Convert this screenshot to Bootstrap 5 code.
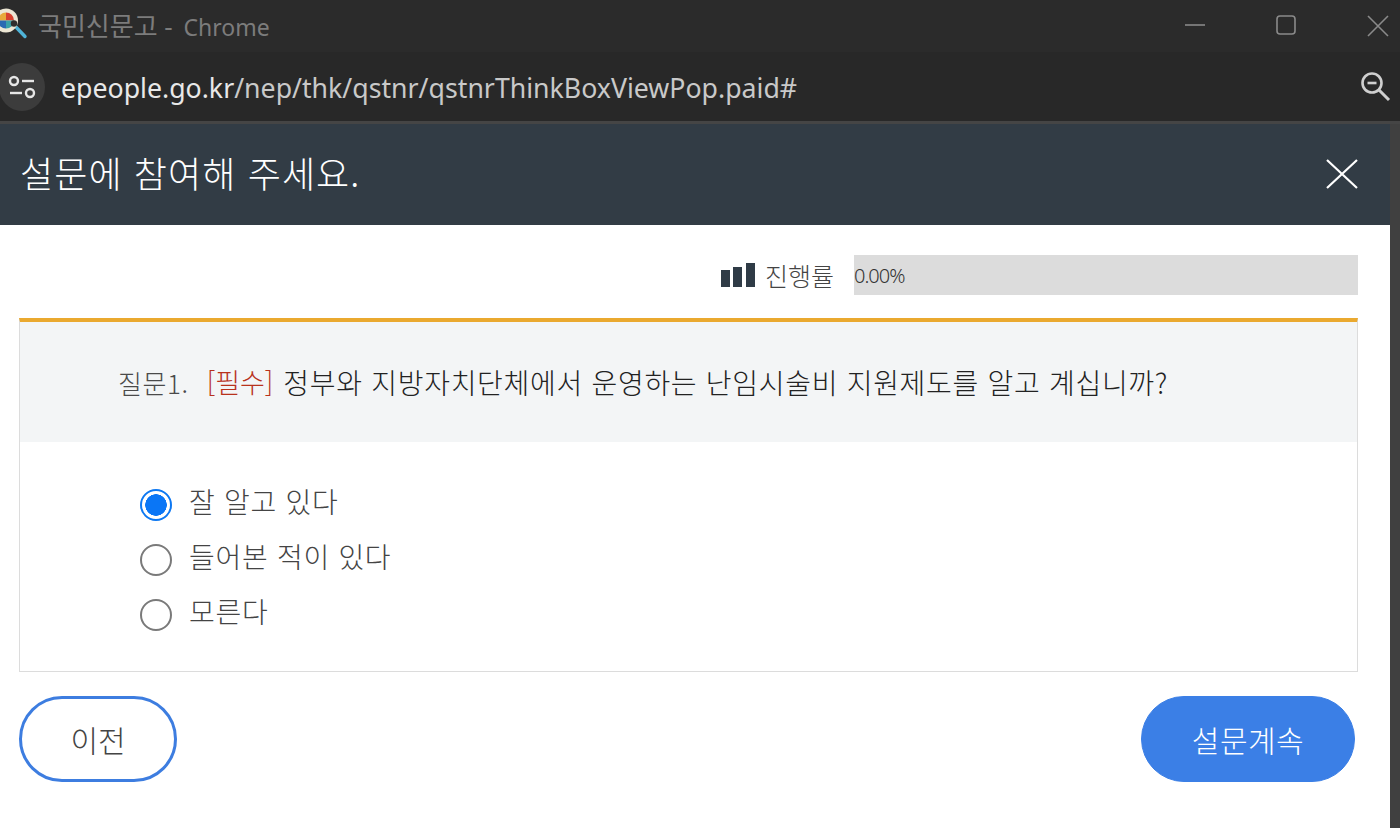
<!DOCTYPE html>
<html lang="ko">
<head>
<meta charset="utf-8">
<title>국민신문고</title>
<link rel="stylesheet" href="https://cdn.jsdelivr.net/npm/bootstrap@5.3.0/dist/css/bootstrap.min.css">
<style>
html,body{height:828px;overflow:hidden;background:#404040;}
body{font-family:"Noto Sans CJK KR","Noto Sans",sans-serif;color:#444;font-weight:300;}
.chrome-title{height:52px;background:#2b2b2b;color:#7c7c7c;font-size:26px;padding-top:1px;}
.chrome-title .appname{margin-left:38px;line-height:50px;white-space:nowrap;font-family:"Noto Sans","Noto Sans CJK KR",sans-serif;font-weight:400;}
.appname .ver{font-size:23px;margin-left:4px;}
.fav{position:absolute;left:0;top:8px;}
.win-ico{position:absolute;top:15px;}
.chrome-addr{height:69px;background:#282828;color:#c9c9c9;font-size:26.7px;font-family:"Noto Sans",sans-serif;font-weight:400;}
.site-btn{width:46px;height:48px;margin-left:-1px;border-radius:50%;background:#3c3c3c;flex:none;}
.addr-host{color:#e8e8e8;}
.addr-text{margin-left:16px;margin-top:4px;white-space:nowrap;}
.zoom-ico{margin-left:auto;margin-right:9px;margin-top:0;}
.chrome-sep{height:3px;background:#454545;}
.pop{width:1390px;height:704px;background:#fff;}
.pop-head{height:101px;background:#323c45;color:#fff;padding:0 32px 0 20px;}
.pop-head h1{font-size:36px;font-weight:300;margin:0 0 5px;line-height:1;letter-spacing:1.1px;}
.pop-head svg{margin-bottom:2px;}
.pop-body{padding:30px 32px 0 19px;}
.prog-row{height:40px;}
.prog-label{font-size:25px;color:#444;margin:0 20px 0 10px;padding-top:2px;}
.prog-track{width:504px;height:40px;background:#dcdcdc;font-size:20px;color:#333;line-height:42px;letter-spacing:-1px;font-family:"Noto Sans",sans-serif;font-weight:300;}
.q-box{margin-top:23px;border:1px solid #dcdcdc;border-top:4px solid #eaa92f;height:354px;}
.q-title{height:120px;background:#f3f5f6;padding-left:98px;font-size:28px;color:#222;white-space:nowrap;letter-spacing:.7px;}
.q-num{color:#4a4a4a;margin-right:18px;font-size:26px;letter-spacing:.6px;}
.q-req{color:#b8321c;margin-right:10px;font-size:27px;letter-spacing:0;}
.q-opts{padding:33px 0 0 120px;}
.opt{height:55px;font-size:28px;color:#444;gap:17px;letter-spacing:.7px;}
.opt .form-check-input{width:32px;height:32px;margin:0;border:2px solid #7a7a7a;flex:none;margin-top:5px;float:none;}
.opt .form-check-input:checked{background-color:#fff;border-color:#0d78f2;background-image:radial-gradient(circle,#0a76f6 0,#0a76f6 10.5px,#fff 11px);}
.opt label{margin-top:-3px;}
.btn-row{margin-top:24px;padding-right:3px;}
.btn-prev,.btn-next{height:86px;border-radius:43px;font-size:30px;padding:0;font-weight:300;}
.btn-prev{width:158px;background:#fff;border:3px solid #3d7de0;color:#444;}
.btn-next{width:214px;background:#3b7fe6;border:1px solid #3b7fe6;color:#fff;letter-spacing:.5px;}
.btn-prev:hover{background:#fff;color:#444;border-color:#3d7de0;}
.btn-next:hover{background:#3b7fe6;color:#fff;border-color:#3b7fe6;}
</style>
</head>
<body>
<div class="chrome-title position-relative">
  <svg class="fav" width="28" height="31" viewBox="0 0 28 31">
    <line x1="14" y1="17" x2="25" y2="28.500" stroke="#4fb4d8" stroke-width="3.400" stroke-linecap="round"/>
    <circle cx="6" cy="12.500" r="12" fill="#ece6d4"/>
    <path d="M6 12.500V4.500A8 8 0 0 1 14 12.500z" fill="#d8412f"/>
    <path d="M6 12.500H-2A8 8 0 0 1 6 4.500z" fill="#e8a93a"/>
    <path d="M6 12.500V20.500A8 8 0 0 1 -2 12.500z" fill="#2b69b3"/>
    <path d="M6 12.500H14A8 8 0 0 1 6 20.500z" fill="#3aa0a8"/>
    <circle cx="14" cy="15.500" r="3.200" fill="#2e2e2e"/>
  </svg>
  <div class="appname">국민신문고 - <span class="ver">Chrome</span></div>
  <svg class="win-ico" style="left:1185px" width="20" height="20" viewBox="0 0 20 20"><line x1="0" y1="10" x2="20" y2="10" stroke="#8a8a8a" stroke-width="1.6"/></svg>
  <svg class="win-ico" style="left:1276px" width="20" height="20" viewBox="0 0 20 20"><rect x="1" y="1" width="18" height="18" rx="3" fill="none" stroke="#8a8a8a" stroke-width="1.6"/></svg>
  <svg class="win-ico" style="left:1367px" width="22" height="22" viewBox="0 0 22 22"><path d="M1 1l20 20M21 1L1 21" stroke="#8a8a8a" stroke-width="1.6"/></svg>
</div>
<div class="chrome-addr d-flex align-items-center">
  <div class="site-btn d-flex align-items-center justify-content-center">
    <svg width="28" height="26" viewBox="0 0 28 26"><circle cx="6" cy="7" r="4" fill="none" stroke="#e6e6e6" stroke-width="2.4"/><line x1="14" y1="7" x2="26" y2="7" stroke="#e6e6e6" stroke-width="2.4"/><line x1="2" y1="19" x2="14" y2="19" stroke="#e6e6e6" stroke-width="2.4"/><circle cx="22" cy="19" r="4" fill="none" stroke="#e6e6e6" stroke-width="2.4"/></svg>
  </div>
  <div class="addr-text"><span class="addr-host">epeople.go.kr</span>/nep/thk/qstnr/qstnrThinkBoxViewPop.paid#</div>
  <svg class="zoom-ico" width="30" height="30" viewBox="0 0 30 30"><circle cx="11" cy="11" r="9.500" fill="none" stroke="#cfcfcf" stroke-width="2.6"/><line x1="6.500" y1="11" x2="15.500" y2="11" stroke="#cfcfcf" stroke-width="2.600"/><line x1="18" y1="18" x2="28" y2="28" stroke="#cfcfcf" stroke-width="3"/></svg>
</div>
<div class="chrome-sep"></div>
<div class="pop">
  <div class="pop-head d-flex align-items-center justify-content-between">
    <h1>설문에 참여해 주세요.</h1>
    <svg width="32" height="30" viewBox="0 0 32 30"><path d="M1 1l30 28M31 1L1 29" stroke="#fff" stroke-width="2.2" fill="none"/></svg>
  </div>
  <div class="pop-body">
    <div class="prog-row d-flex align-items-center justify-content-end">
      <svg width="34" height="24" viewBox="0 0 34 24"><rect x="0" y="7" width="9" height="17" fill="#2f3b46"/><rect x="12" y="4" width="9" height="20" fill="#2f3b46"/><rect x="25" y="0" width="9" height="24" fill="#2f3b46"/></svg>
      <span class="prog-label">진행률</span>
      <div class="prog-track">0.00%</div>
    </div>
    <div class="q-box">
      <div class="q-title d-flex align-items-center">
        <span class="q-num">질문1.</span><span class="q-req">[필수]</span><span>정부와 지방자치단체에서 운영하는 난임시술비 지원제도를 알고 계십니까?</span>
      </div>
      <div class="q-opts">
        <div class="opt d-flex align-items-center form-check p-0 m-0">
          <input class="form-check-input" type="radio" name="q1" id="o1" checked>
          <label for="o1">잘 알고 있다</label>
        </div>
        <div class="opt d-flex align-items-center form-check p-0 m-0">
          <input class="form-check-input" type="radio" name="q1" id="o2">
          <label for="o2">들어본 적이 있다</label>
        </div>
        <div class="opt d-flex align-items-center form-check p-0 m-0">
          <input class="form-check-input" type="radio" name="q1" id="o3">
          <label for="o3">모른다</label>
        </div>
      </div>
    </div>
    <div class="btn-row d-flex justify-content-between">
      <button type="button" class="btn btn-prev">이전</button>
      <button type="button" class="btn btn-next">설문계속</button>
    </div>
  </div>
</div>
<script src="https://cdn.jsdelivr.net/npm/bootstrap@5.3.0/dist/js/bootstrap.bundle.min.js"></script>
</body>
</html>
